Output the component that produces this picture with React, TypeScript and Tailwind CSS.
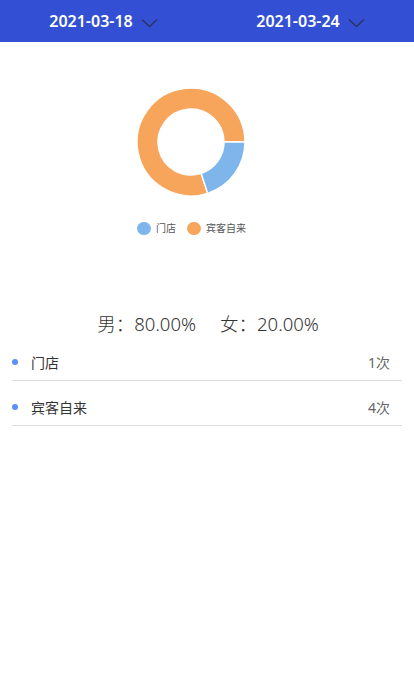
import React from "react";

function arc(cx: number, cy: number, R: number, r: number, a0: number, a1: number) {
  const rad = (a: number) => (a * Math.PI) / 180;
  const p = (rr: number, a: number) => [cx + rr * Math.cos(rad(a)), cy + rr * Math.sin(rad(a))];
  const large = a1 - a0 > 180 ? 1 : 0;
  const [x0, y0] = p(R, a0);
  const [x1, y1] = p(R, a1);
  const [x2, y2] = p(r, a1);
  const [x3, y3] = p(r, a0);
  return `M${x0} ${y0} A${R} ${R} 0 ${large} 1 ${x1} ${y1} L${x2} ${y2} A${r} ${r} 0 ${large} 0 ${x3} ${y3} Z`;
}

function Chevron() {
  return (
    <svg width="17" height="10" viewBox="0 0 17 10" className="ml-2 mt-[3px]">
      <path d="M1 1.5 L8.5 8.5 L16 1.5" fill="none" stroke="#2a3560" strokeWidth="1.5" />
    </svg>
  );
}

export default function App() {
  const font = { fontFamily: '"Noto Sans", "Noto Sans CJK SC", sans-serif' };
  return (
    <div className="w-[414px] h-[692px] bg-white" style={font}>
      <div className="h-[42px] bg-[#3350d4] flex">
        <div className="flex-1 flex items-center justify-center">
          <span className="text-white text-[16px] font-semibold">2021-03-18</span>
          <Chevron />
        </div>
        <div className="flex-1 flex items-center justify-center">
          <span className="text-white text-[16px] font-semibold">2021-03-24</span>
          <Chevron />
        </div>
      </div>
      <div className="h-[262px] relative">
        <svg width="414" height="250" className="absolute left-0 top-0">
          <path d={arc(191, 100, 54, 33, 72, 360)} fill="#f8a55c" stroke="#fff" strokeWidth="1.5" />
          <path d={arc(191, 100, 54, 33, 0, 72)} fill="#7eb6ec" stroke="#fff" strokeWidth="1.5" />
        </svg>
        <div className="absolute left-[137px] top-[179px] flex items-center text-[10px] text-[#555]">
          <span className="w-[14px] h-[13px] rounded-full bg-[#7eb6ec]" />
          <span className="ml-[5px]">门店</span>
          <span className="ml-[11px] w-[14px] h-[13px] rounded-full bg-[#f8a55c]" />
          <span className="ml-[5px]">宾客自来</span>
        </div>
      </div>
      <div className="h-[40px] flex items-center justify-center text-[18.5px] text-[#333] font-light pl-[2px]">
        <span>男：80.00%</span>
        <span className="ml-[24px]">女：20.00%</span>
      </div>
      <div className="px-[12px]">
        <div className="h-[37px] flex items-center border-b border-[#ddd] text-[14px]">
          <span className="w-[6px] h-[6px] rounded-full bg-[#5b8ff9] mr-[13px]" />
          <span className="text-[#333]">门店</span>
          <span className="ml-auto mr-[12px] text-[#666]">1次</span>
        </div>
        <div className="h-[45px] pt-[8px] flex items-center border-b border-[#ddd] text-[14px]">
          <span className="w-[6px] h-[6px] rounded-full bg-[#5b8ff9] mr-[13px]" />
          <span className="text-[#333]">宾客自来</span>
          <span className="ml-auto mr-[12px] text-[#666]">4次</span>
        </div>
      </div>
    </div>
  );
}
